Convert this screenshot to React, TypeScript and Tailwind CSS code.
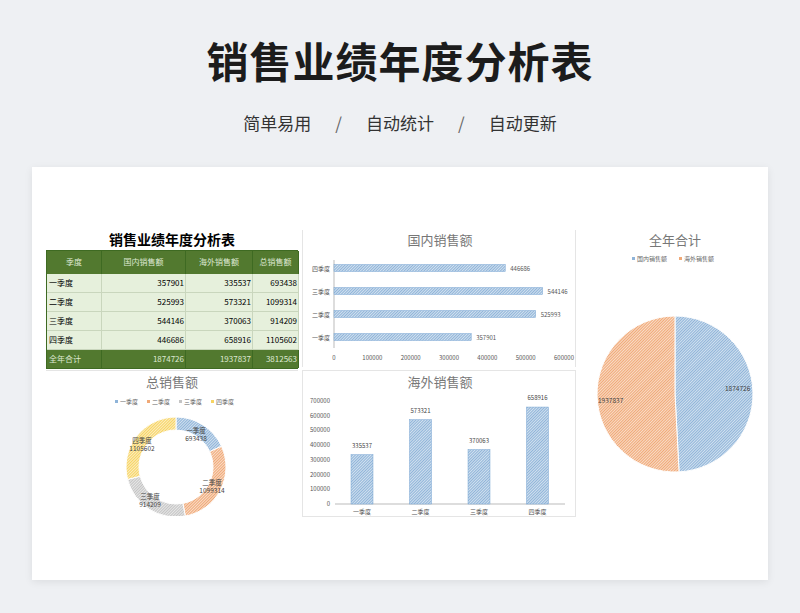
const F = '"Noto Sans CJK SC", "Liberation Sans", sans-serif';

const rows = [
  ["一季度", "357901", "335537", "693438"],
  ["二季度", "525993", "573321", "1099314"],
  ["三季度", "544146", "370063", "914209"],
  ["四季度", "446686", "658916", "1105602"],
];

function Table() {
  return (
    <div className="flex flex-col h-[137px]">
      <div className="h-[20px] flex items-center justify-center text-[14px] font-bold text-black">销售业绩年度分析表</div>
      <div className="grid grid-cols-[55px_84px_67px_46px] text-[8px] border border-[#3e6a22]">
        {["季度", "国内销售额", "海外销售额", "总销售额"].map((h) => (
          <div key={h} className="h-[23px] bg-[#52792f] text-[#dfe9d4] flex items-center justify-center border-r border-[#3e6a22]">{h}</div>
        ))}
        {rows.map((r) =>
          r.map((c, i) => (
            <div key={r[0] + i} className={`h-[19px] bg-[#e6f0dc] border-r border-b border-[#c9d6bd] text-black flex items-center ${i === 0 ? "pl-[2px]" : "justify-end pr-[1px]"}`}>{c}</div>
          ))
        )}
        {["全年合计", "1874726", "1937837", "3812563"].map((c, i) => (
          <div key={c} className={`h-[18px] bg-[#52792f] text-[#dfe9d4] border-r border-[#3e6a22] flex items-center ${i === 0 ? "pl-[2px]" : "justify-end pr-[1px]"}`}>{c}</div>
        ))}
      </div>
    </div>
  );
}

function Hatch({ id, color }: { id: string; color: string }) {
  return (
    <pattern id={id} width="2" height="2" patternUnits="userSpaceOnUse" patternTransform="rotate(45)">
      <rect width="2" height="2" fill="#fff" />
      <rect width="1.4" height="2" fill={color} />
    </pattern>
  );
}

function DomesticBars() {
  const data = [["四季度", 446686], ["三季度", 544146], ["二季度", 525993], ["一季度", 357901]] as const;
  const x0 = 31, w = 230;
  return (
    <svg width="274" height="137" style={{ fontFamily: F }}>
      <defs><Hatch id="hb" color="#8fb4d9" /></defs>
      <text x="137" y="15" textAnchor="middle" fontSize="13" fill="#777">国内销售额</text>
      <line x1={x0} y1="30" x2={x0} y2="118" stroke="#bbb" />
      {data.map(([l, v], i) => {
        const y = 38 + i * 23;
        const bw = (v / 600000) * w;
        return (
          <g key={l}>
            <text x={x0 - 4} y={y + 3} textAnchor="end" fontSize="6" fill="#555">{l}</text>
            <rect x={x0} y={y - 3.5} width={bw} height="7" fill="url(#hb)" stroke="#7aa6d3" strokeWidth="0.5" />
            <text x={x0 + bw + 5} y={y + 3} fontSize="6" fill="#555">{v}</text>
          </g>
        );
      })}
      {[0, 1, 2, 3, 4, 5, 6].map((k) => (
        <text key={k} x={x0 + (k * w) / 6} y="130" textAnchor="middle" fontSize="6" fill="#555">{k * 100000}</text>
      ))}
    </svg>
  );
}

function arc(cx: number, cy: number, r: number, a0: number, a1: number, ri = 0) {
  const p = (r0: number, a: number) => [cx + r0 * Math.sin(a), cy - r0 * Math.cos(a)];
  const large = a1 - a0 > Math.PI ? 1 : 0;
  const [x0, y0] = p(r, a0), [x1, y1] = p(r, a1);
  if (!ri) return `M${cx},${cy} L${x0},${y0} A${r},${r} 0 ${large} 1 ${x1},${y1} Z`;
  const [x2, y2] = p(ri, a1), [x3, y3] = p(ri, a0);
  return `M${x0},${y0} A${r},${r} 0 ${large} 1 ${x1},${y1} L${x2},${y2} A${ri},${ri} 0 ${large} 0 ${x3},${y3} Z`;
}

function Donut() {
  const d = [693438, 1099314, 914209, 1105602];
  const cols = ["#8fb4d9", "#f0a977", "#c4c4c4", "#f7d462"];
  const names = ["一季度", "二季度", "三季度", "四季度"];
  const tot = d.reduce((a, b) => a + b, 0);
  let a = 0;
  const labels = [[150, 62], [166, 114], [104, 128], [96, 72]];
  return (
    <svg width="252" height="145" style={{ fontFamily: F }}>
      <defs>{cols.map((c, i) => <Hatch key={i} id={`d${i}`} color={c} />)}</defs>
      <text x="126" y="16" textAnchor="middle" fontSize="13" fill="#777">总销售额</text>
      {names.map((n, i) => (
        <g key={n}>
          <rect x={69 + i * 32} y="29" width="3" height="3" fill={cols[i]} />
          <text x={74 + i * 32} y="33" fontSize="6" fill="#666">{n}</text>
        </g>
      ))}
      {d.map((v, i) => {
        const a0 = a; a += (v / tot) * Math.PI * 2;
        return <path key={i} d={arc(130, 96, 50, a0, a, 37)} fill={`url(#d${i})`} stroke="#fff" strokeWidth="1" />;
      })}
      {d.map((v, i) => (
        <g key={i}>
          <text x={labels[i][0]} y={labels[i][1]} textAnchor="middle" fontSize="6.5" fill="#444">{names[i]}</text>
          <text x={labels[i][0]} y={labels[i][1] + 8} textAnchor="middle" fontSize="6.5" fill="#444">{v}</text>
        </g>
      ))}
    </svg>
  );
}

function Columns() {
  const d = [335537, 573321, 370063, 658916];
  const names = ["一季度", "二季度", "三季度", "四季度"];
  const base = 133, h = 103;
  return (
    <svg width="274" height="145" style={{ fontFamily: F }}>
      <defs><Hatch id="hc" color="#8fb4d9" /></defs>
      <text x="137" y="16" textAnchor="middle" fontSize="13" fill="#777">海外销售额</text>
      {[0, 1, 2, 3, 4, 5, 6, 7].map((k) => (
        <text key={k} x="27" y={base - (k * h) / 7 + 2} textAnchor="end" fontSize="6" fill="#555">{k * 100000}</text>
      ))}
      <line x1="32" y1={base} x2="262" y2={base} stroke="#bbb" />
      {d.map((v, i) => {
        const cx = 59 + i * 58.5;
        const bh = (v / 700000) * h;
        return (
          <g key={i}>
            <rect x={cx - 11} y={base - bh} width="22" height={bh} fill="url(#hc)" stroke="#7aa6d3" strokeWidth="0.5" />
            <text x={cx} y={base - bh - 7} textAnchor="middle" fontSize="6" fill="#444">{v}</text>
            <text x={cx} y={base + 10} textAnchor="middle" fontSize="6" fill="#555">{names[i]}</text>
          </g>
        );
      })}
    </svg>
  );
}

function Pie() {
  const a = (1874726 / 3812563) * Math.PI * 2;
  return (
    <svg width="190" height="290" style={{ fontFamily: F }}>
      <defs><Hatch id="p0" color="#8fb4d9" /><Hatch id="p1" color="#f0a977" /></defs>
      <text x="95" y="20" textAnchor="middle" fontSize="13" fill="#777">全年合计</text>
      <rect x="52" y="32" width="3" height="3" fill="#8fb4d9" />
      <text x="57" y="36" fontSize="6" fill="#666">国内销售额</text>
      <rect x="99" y="32" width="3" height="3" fill="#f0a977" />
      <text x="104" y="36" fontSize="6" fill="#666">海外销售额</text>
      <path d={arc(95, 169, 78, 0, a)} fill="url(#p0)" stroke="#fff" />
      <path d={arc(95, 169, 78, a, Math.PI * 2 - 0.0001)} fill="url(#p1)" stroke="#fff" />
      <text x="145" y="166" fontSize="6.5" fill="#444">1874726</text>
      <text x="18" y="178" fontSize="6.5" fill="#444">1937837</text>
    </svg>
  );
}

export default function App() {
  return (
    <div className="w-[800px] h-[613px] bg-[#eef0f3] flex flex-col items-center" style={{ fontFamily: F }}>
      <h1 className="mt-[32px] text-[42px] leading-[56px] font-bold text-[#1c1c1c] tracking-[1px]">销售业绩年度分析表</h1>
      <div className="mt-[22px] flex items-center gap-[24px] text-[17px] text-[#333]">
        <span>简单易用</span><span className="text-[#666]">/</span><span>自动统计</span><span className="text-[#666]">/</span><span>自动更新</span>
      </div>
      <div className="mt-[31px] w-[736px] h-[413px] bg-white shadow-[0_2px_8px_rgba(0,0,0,0.08)] pt-[63px] pl-[14px]">
        <div className="flex gap-[4px]">
          <div className="flex flex-col gap-[3px]">
            <div className="flex gap-[4px]">
              <div className="w-[252px]"><Table /></div>
              <div className="w-[274px] border-l border-r border-[#e5e5e5]"><DomesticBars /></div>
            </div>
            <div className="flex gap-[4px]">
              <div className="w-[252px] border-t border-[#e5e5e5]"><Donut /></div>
              <div className="w-[274px] border border-[#e5e5e5]"><Columns /></div>
            </div>
          </div>
          <div className="-mt-[5px]"><Pie /></div>
        </div>
      </div>
    </div>
  );
}
